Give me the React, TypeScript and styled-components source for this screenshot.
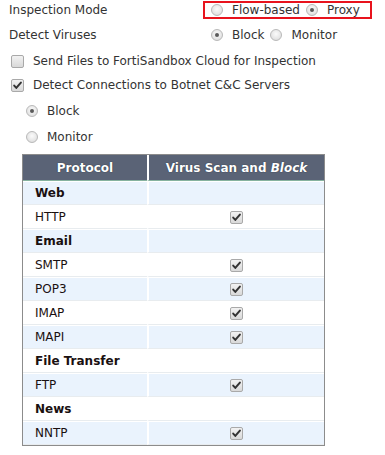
import React from "react";
import styled, { createGlobalStyle } from "styled-components";

const GlobalStyle = createGlobalStyle`
  body {
    margin: 0;
    background: #fff;
    font-family: "DejaVu Sans", Verdana, sans-serif;
    font-size: 12px;
    color: #333;
  }
`;

const Page = styled.div`
  padding-left: 9px;
  display: flex;
  flex-direction: column;
`;

const Row = styled.div<{ $top?: number; $indent?: number; $h?: number }>`
  display: flex;
  align-items: center;
  height: ${(p) => p.$h ?? 24}px;
  margin-top: ${(p) => p.$top ?? 0}px;
  padding-left: ${(p) => p.$indent ?? 0}px;
  white-space: nowrap;
`;

const Label = styled.span`
  width: 194px;
  flex-shrink: 0;
`;

const Choices = styled.div<{ $highlight?: boolean }>`
  display: flex;
  align-items: center;
  flex-shrink: 0;
  box-sizing: border-box;
  height: 18px;
  padding: 0 6px;
  border: 2px solid ${(p) => (p.$highlight ? "#e8131d" : "transparent")};
  width: ${(p) => (p.$highlight ? "169px" : "auto")};
`;

const Option = styled.label`
  display: flex;
  align-items: center;
  flex-shrink: 0;
  gap: 9px;
  margin-right: 6px;
  white-space: nowrap;
`;

const Radio = styled.span<{ $checked?: boolean }>`
  position: relative;
  width: 10px;
  height: 10px;
  border-radius: 50%;
  border: 1px solid #b9b9b9;
  background: radial-gradient(circle at 50% 40%, #fbfbfb 0%, #e6e6e6 60%, #d2d2d2 100%);
  flex-shrink: 0;
  &::after {
    content: "";
    display: ${(p) => (p.$checked ? "block" : "none")};
    position: absolute;
    left: 3px;
    top: 3px;
    width: 4px;
    height: 4px;
    border-radius: 50%;
    background: #5a5a5a;
  }
`;

const Box = styled.span<{ $checked?: boolean }>`
  display: inline-flex;
  align-items: center;
  justify-content: center;
  width: 11px;
  height: 11px;
  border: 1px solid #a9a9a9;
  border-radius: 2px;
  background: linear-gradient(#f2f2f2, #d9d9d9);
  flex-shrink: 0;
  vertical-align: middle;
`;

const Check: React.FC<{ checked?: boolean }> = ({ checked }) => (
  <Box $checked={checked}>
    {checked && (
      <svg width="11" height="11" viewBox="0 0 11 11">
        <path
          d="M2.2 5.6 L4.3 7.9 L8.9 2.6"
          fill="none"
          stroke="#333"
          strokeWidth="2"
          strokeLinecap="round"
          strokeLinejoin="round"
        />
      </svg>
    )}
  </Box>
);

const CheckLabel = styled.label`
  display: flex;
  align-items: center;
  gap: 9px;
  padding-left: 2px;
`;

const Table = styled.table`
  margin: 5px 0 0 13px;
  width: 303px;
  border: 1px solid #8c8c8c;
  border-collapse: separate;
  border-spacing: 0;
`;

const Th = styled.th`
  height: 25px;
  padding: 0;
  background: #5a6376;
  color: #fff;
  font-weight: bold;
  text-align: center;
  text-shadow: 0 0 1px #1c2230;
  border-bottom: 1px solid #86b29f;
  & + & {
    border-left: 2px solid #fff;
  }
  &:first-child {
    width: 124px;
  }
`;

const Tr = styled.tr<{ $shaded?: boolean }>`
  background: ${(p) => (p.$shaded ? "#eaf3fd" : "#fff")};
`;

const Td = styled.td<{ $group?: boolean; $center?: boolean }>`
  height: 22px;
  padding: 0 0 0 12px;
  color: #1a1010;
  font-weight: ${(p) => (p.$group ? "bold" : "normal")};
  text-align: ${(p) => (p.$center ? "center" : "left")};
  border-top: 1px solid #fff;
  border-bottom: 1px solid #e8ecef;
  & + & {
    border-left: 2px solid #fff;
    padding-left: 0;
  }
  line-height: 0;
`;

const CellText = styled.span`
  line-height: 14px;
  display: inline-block;
`;

const rows: { name: string; group?: boolean }[] = [
  { name: "Web", group: true },
  { name: "HTTP" },
  { name: "Email", group: true },
  { name: "SMTP" },
  { name: "POP3" },
  { name: "IMAP" },
  { name: "MAPI" },
  { name: "File Transfer", group: true },
  { name: "FTP" },
  { name: "News", group: true },
  { name: "NNTP" },
];

export default function App() {
  return (
    <>
      <GlobalStyle />
      <Page>
        <Row $h={20}>
          <Label>Inspection Mode</Label>
          <Choices $highlight>
            <Option>
              <Radio />
              Flow-based
            </Option>
            <Option>
              <Radio $checked />
              Proxy
            </Option>
          </Choices>
        </Row>
        <Row $top={3}>
          <Label>Detect Viruses</Label>
          <Choices>
            <Option>
              <Radio $checked />
              Block
            </Option>
            <Option>
              <Radio />
              Monitor
            </Option>
          </Choices>
        </Row>
        <Row $top={2}>
          <CheckLabel>
            <Check />
            Send Files to FortiSandbox Cloud for Inspection
          </CheckLabel>
        </Row>
        <Row>
          <CheckLabel>
            <Check checked />
            Detect Connections to Botnet C&amp;C Servers
          </CheckLabel>
        </Row>
        <Row $top={2} $indent={17}>
          <Option>
            <Radio $checked />
            Block
          </Option>
        </Row>
        <Row $top={2} $indent={17}>
          <Option>
            <Radio />
            Monitor
          </Option>
        </Row>
        <Table>
          <thead>
            <tr>
              <Th>Protocol</Th>
              <Th>
                Virus Scan and <em>Block</em>
              </Th>
            </tr>
          </thead>
          <tbody>
            {rows.map((r, i) => (
              <Tr key={r.name} $shaded={i % 2 === 0}>
                <Td $group={r.group}>
                  <CellText>{r.name}</CellText>
                </Td>
                <Td $center>{!r.group && <Check checked />}</Td>
              </Tr>
            ))}
          </tbody>
        </Table>
      </Page>
    </>
  );
}
